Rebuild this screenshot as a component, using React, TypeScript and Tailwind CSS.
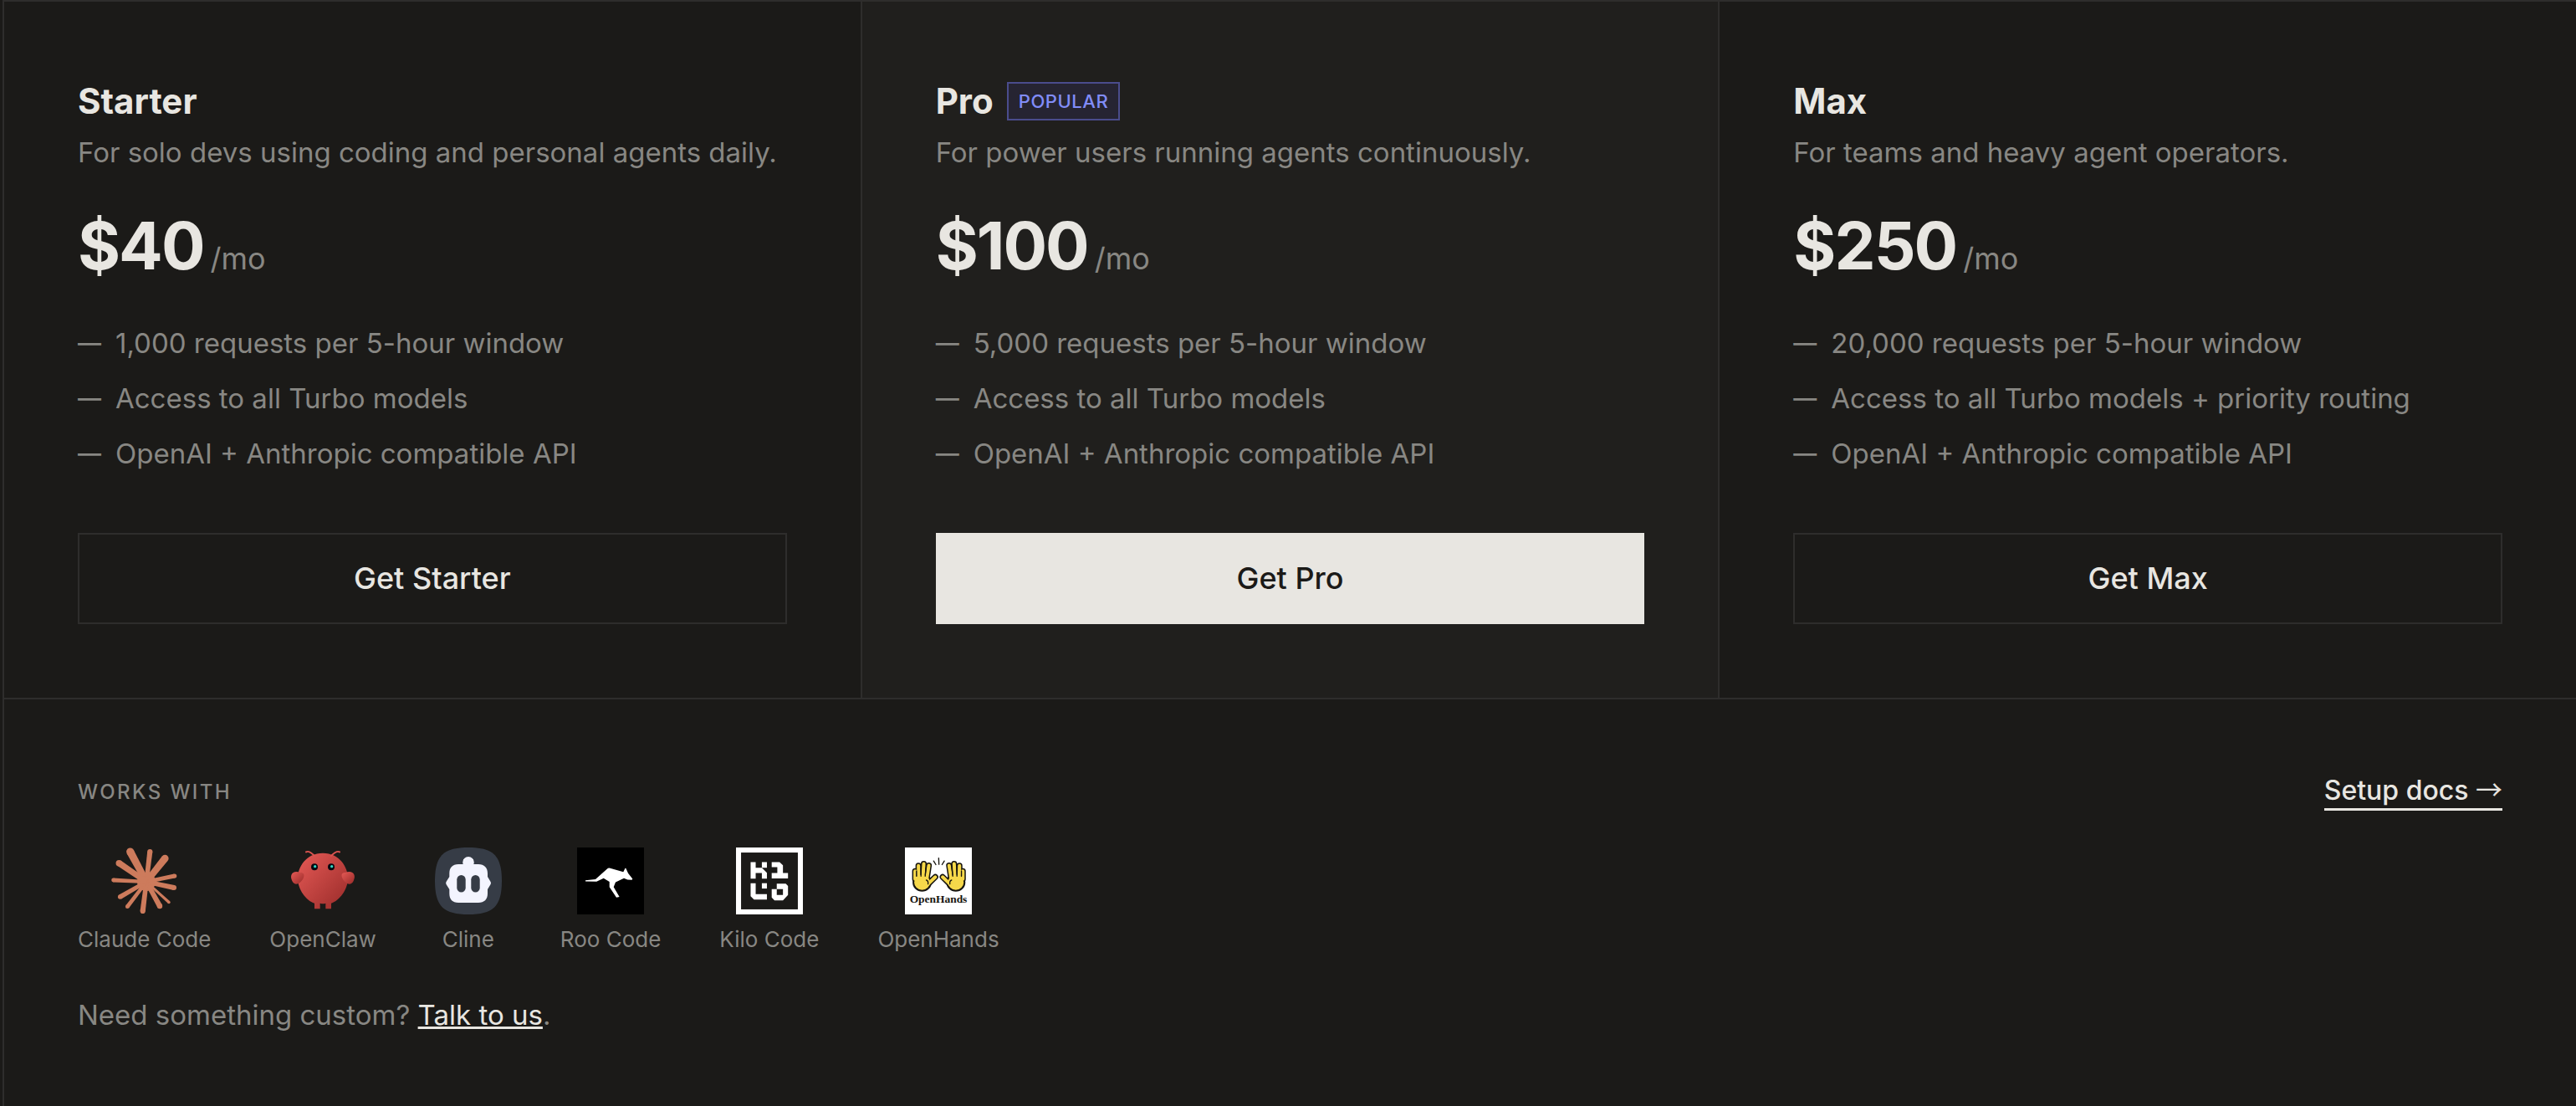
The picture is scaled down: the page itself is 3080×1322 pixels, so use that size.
import type { ReactNode } from "react";

type Plan = {
  name: string;
  badge?: string;
  description: string;
  price: string;
  features: string[];
};

const plans: Plan[] = [
  {
    name: "Starter",
    description: "For solo devs using coding and personal agents daily.",
    price: "$40",
    features: [
      "1,000 requests per 5-hour window",
      "Access to all Turbo models",
      "OpenAI + Anthropic compatible API",
    ],
  },
  {
    name: "Pro",
    badge: "POPULAR",
    description: "For power users running agents continuously.",
    price: "$100",
    features: [
      "5,000 requests per 5-hour window",
      "Access to all Turbo models",
      "OpenAI + Anthropic compatible API",
    ],
  },
  {
    name: "Max",
    description: "For teams and heavy agent operators.",
    price: "$250",
    features: [
      "20,000 requests per 5-hour window",
      "Access to all Turbo models + priority routing",
      "OpenAI + Anthropic compatible API",
    ],
  },
];

// Each ray of the burst: tip x, tip y, tip radius.
const rays: [number, number, number][] = [
  [22.7, 5, 4.6],
  [46.3, 5, 3.1],
  [64.3, 13, 4.3],
  [75.7, 34, 2.6],
  [75, 48, 3],
  [69, 65.5, 1.7],
  [58, 70, 3.2],
  [37.7, 76, 3.1],
  [19.3, 70.7, 2.4],
  [10.7, 59, 2.8],
  [2.6, 39, 2.4],
  [9.3, 18.7, 3.8],
];

function ClaudeIcon() {
  const cx = 42;
  const cy = 41;
  return (
    <svg viewBox="0 0 80 80" className="size-20" fill="#cd7b5c" aria-hidden="true">
      <circle cx={cx} cy={cy} r="11" />
      {rays.map(([x, y, r]) => {
        const len = Math.hypot(x - cx, y - cy);
        const nx = (-(y - cy) / len) * r;
        const ny = ((x - cx) / len) * r;
        const k = 0.85;
        return (
          <g key={x}>
            <circle cx={x} cy={y} r={r} />
            <polygon
              points={`${x + nx},${y + ny} ${x - nx},${y - ny} ${cx - nx * k},${cy - ny * k} ${cx + nx * k},${cy + ny * k}`}
            />
          </g>
        );
      })}
    </svg>
  );
}

function OpenClawIcon() {
  return (
    <svg viewBox="0 0 120 120" className="size-20" aria-hidden="true">
      <defs>
        <linearGradient id="claw" x1="0" y1="0" x2="1" y2="1">
          <stop offset="0" stopColor="#e65a56" />
          <stop offset="1" stopColor="#992b29" />
        </linearGradient>
      </defs>
      <path
        fill="url(#claw)"
        d="M60 10C30 10 15 35 15 55C15 75 30 95 45 100L45 110L55 110L55 100C55 100 60 102 65 100L65 110L75 110L75 100C90 95 105 75 105 55C105 35 90 10 60 10Z"
      />
      <path fill="url(#claw)" d="M20 45C5 40 0 50 5 60C10 70 20 65 25 55C28 48 25 45 20 45Z" />
      <path fill="url(#claw)" d="M100 45C115 40 120 50 115 60C110 70 100 65 95 55C92 48 95 45 100 45Z" />
      <path d="M45 15Q35 5 30 8M75 15Q85 5 90 8" stroke="#dc5450" strokeWidth="3" strokeLinecap="round" fill="none" />
      <circle cx="45" cy="35" r="6" fill="#050810" />
      <circle cx="75" cy="35" r="6" fill="#050810" />
      <circle cx="46" cy="34" r="2.5" fill="#33d6c4" />
      <circle cx="76" cy="34" r="2.5" fill="#33d6c4" />
    </svg>
  );
}

function ClineIcon() {
  return (
    <svg viewBox="0 0 80 80" className="size-20" aria-hidden="true">
      <path fill="#363c46" d="M40 0C69 0 80 9 80 40C80 71 69 80 40 80C11 80 0 71 0 40C0 9 11 0 40 0Z" />
      <g fill="#f3f4fe">
        <circle cx="40" cy="17.8" r="6.8" />
        <path d="M34 14H46V24H34Z" />
        <path d="M28 20H52C59 20 63 24 63 31V35L66.6 41Q67.4 42.5 66.6 44L63 50V55C63 62 59 66 52 66H28C21 66 17.3 62 17.3 55V50L13.5 44Q12.8 42.5 13.5 41L17.3 35V31C17.3 24 21 20 28 20Z" />
      </g>
      <rect x="26.3" y="33" width="10.4" height="20.5" rx="5.2" fill="#363c46" />
      <rect x="43.3" y="33" width="10.4" height="20.5" rx="5.2" fill="#363c46" />
    </svg>
  );
}

function RooIcon() {
  return (
    <svg viewBox="0 0 80 80" className="size-20" aria-hidden="true">
      <rect width="80" height="80" fill="#000" />
      <path
        fill="#fff"
        d="M10 39.3L22 38L36 25.5Q37.5 24 39.5 24.7L55.3 29.3L57.5 24.7H58.3L61 30.7L66.3 37.5L65.5 38.7L60.3 38.5L56 36.7L46 41.5L43.7 47.3L50.6 59L47 59.8L38.7 47.3V41L31.7 36.7L23.3 40.7L10 40.5Z"
      />
    </svg>
  );
}

function KiloIcon() {
  return (
    <svg viewBox="63 36 238 238" className="size-20" aria-hidden="true">
      <rect x="63" y="36" width="238" height="238" fill="#fff" />
      <rect x="81" y="54" width="202" height="202" fill="#1b1a18" />
      <g fill="#fff">
        <path d="M115 88H133V108H155L173 126V147H155V127H133V147H115Z" />
        <rect x="155" y="88" width="18" height="20" />
        <path d="M190 88H218L230 99V127H248V146H190V127H210V106H190Z" />
        <path d="M115 163H133V202H173V221H127L115 209Z" />
        <rect x="155" y="163" width="18" height="19" />
        <path fillRule="evenodd" d="M208 165H240L248 173V205L230 224H200L190 214V184L208 184ZM208 184V205H230V184Z" />
      </g>
    </svg>
  );
}

function Hand() {
  const shape = "M106 148L106 120M119 145L118 101M134 145L137 94M148 145L155 100M150 168L178 141";
  return (
    <g strokeLinecap="round" fill="none">
      <ellipse cx="131" cy="160" rx="34" ry="33" fill="#16140f" />
      <path d={shape} stroke="#16140f" strokeWidth="21" />
      <ellipse cx="131" cy="160" rx="28" ry="27" fill="#f6d84a" />
      <path d={shape} stroke="#f6d84a" strokeWidth="12" />
      <path d="M111 120V138M127 108V138M145 108L142 138M152 166Q154 154 146 152" stroke="#16140f" strokeWidth="4" />
    </g>
  );
}

function OpenHandsIcon() {
  return (
    <svg viewBox="70 36 238 238" className="size-20" aria-hidden="true">
      <rect x="70" y="36" width="238" height="238" fill="#fff" />
      <Hand />
      <g transform="translate(382 0) scale(-1 1)">
        <Hand />
      </g>
      <path d="M172 84L180 97M190 74L191 96M210 84L202 97" stroke="#16140f" strokeWidth="4" strokeLinecap="round" />
      <text
        x="189"
        y="231"
        textAnchor="middle"
        fontFamily="'Liberation Serif', serif"
        fontWeight="700"
        fontSize="40"
        fill="#16140f"
      >
        OpenHands
      </text>
    </svg>
  );
}

const tools: { name: string; icon: ReactNode }[] = [
  { name: "Claude Code", icon: <ClaudeIcon /> },
  { name: "OpenClaw", icon: <OpenClawIcon /> },
  { name: "Cline", icon: <ClineIcon /> },
  { name: "Roo Code", icon: <RooIcon /> },
  { name: "Kilo Code", icon: <KiloIcon /> },
  { name: "OpenHands", icon: <OpenHandsIcon /> },
];

function PlanCard({ plan }: { plan: Plan }) {
  const featured = Boolean(plan.badge);
  return (
    <article className={featured ? "bg-[#201f1d] p-[88px]" : "bg-[#1b1a18] p-[88px]"}>
      <div className="flex items-center gap-4">
        <h3 className="text-[42px] leading-[62px] font-bold">{plan.name}</h3>
        {plan.badge && (
          <span className="border-2 border-[#4a4c8c] bg-[#262432] px-3 text-[22px] leading-[42px] font-medium tracking-wide text-[#818cf8]">
            {plan.badge}
          </span>
        )}
      </div>
      <p className="mt-1 text-[33px] leading-[52px] text-[#888783]">{plan.description}</p>
      <p className="mt-11 flex items-baseline gap-2">
        <span className="text-[78px] leading-[84px] font-bold tracking-tight">{plan.price}</span>
        <span className="text-[36px] leading-[40px] text-[#888783]">/mo</span>
      </p>
      <ul className="mt-13 flex flex-col gap-[22px] text-[33px] leading-[44px] text-[#888783]">
        {plan.features.map((feature) => (
          <li key={feature} className="flex">
            <span className="w-[45px] shrink-0 text-[28px] font-medium">—</span>
            {feature}
          </li>
        ))}
      </ul>
      <button
        type="button"
        className={
          featured
            ? "mt-[73px] h-[109px] w-full bg-[#e8e6e1] pb-0.5 text-[36px] font-medium text-[#1b1a18]"
            : "mt-[73px] h-[109px] w-full border-2 border-[#2e2d2c] pb-0.5 text-[36px] font-medium text-[#e8e6e1]"
        }
      >
        Get {plan.name}
      </button>
    </article>
  );
}

export default function App() {
  return (
    <main className="min-h-screen bg-[#1b1a18] pl-[3px] font-['Inter',sans-serif] text-[#e8e6e1]">
      <div className="flex min-h-screen flex-col border-t-2 border-l-2 border-[#2e2d2c]">
        <section className="grid grid-cols-3 gap-0.5 border-b-2 border-[#2e2d2c] bg-[#2e2d2c]">
          {plans.map((plan) => (
            <PlanCard key={plan.name} plan={plan} />
          ))}
        </section>
        <section className="px-[88px] pt-[88px] pb-20">
          <div className="flex items-center justify-between">
            <h4 className="text-[24px] font-medium tracking-widest text-[#888783]">WORKS WITH</h4>
            <a href="#docs" className="border-b-3 border-[#e8e6e1] text-[32px] leading-[42px] font-medium">
              Setup docs <span className="font-['Noto_Sans_CJK_JP',sans-serif] leading-none font-normal">→</span>
            </a>
          </div>
          <ul className="mt-11 flex flex-wrap gap-[70px]">
            {tools.map((tool) => (
              <li key={tool.name} className="flex flex-col items-center gap-3.5">
                {tool.icon}
                <span className="text-[26px] leading-[32px] text-[#888783]">{tool.name}</span>
              </li>
            ))}
          </ul>
          <p className="mt-12 text-[33px] leading-[52px] text-[#888783]">
            Need something custom?{" "}
            <a href="#contact" className="text-[#e8e6e1] underline decoration-3 underline-offset-2">
              Talk to us
            </a>
            .
          </p>
        </section>
      </div>
    </main>
  );
}
